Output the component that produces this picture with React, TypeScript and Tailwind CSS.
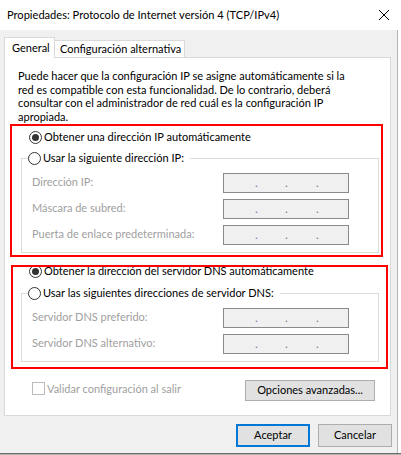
import React from "react";

function Radio({ checked }: { checked?: boolean }) {
  return (
    <span className="w-[13px] h-[13px] rounded-full border border-[#333333] bg-white flex items-center justify-center shrink-0">
      {checked && <span className="w-[7px] h-[7px] rounded-full bg-[#333333]" />}
    </span>
  );
}

function IpField() {
  return (
    <div className="w-[126px] h-[20px] border border-[#8a8a8a] bg-[#f0f0f0] flex items-end pl-[31px] pb-[3px] text-[#7a7a8a] leading-none text-[12px]">
      <span className="w-[30px]">.</span>
      <span className="w-[31px]">.</span>
      <span className="w-[30px]">.</span>
    </div>
  );
}

function Row({ label }: { label: string }) {
  return (
    <>
      <span className="text-[#a0a0a0] whitespace-nowrap">{label}</span>
      <IpField />
    </>
  );
}

function Group({ legend, rows }: { legend: string; rows: string[] }) {
  return (
    <fieldset className="ml-[16px] w-[358px] border border-[#dcdcdc] pl-[6px] pb-[7px]">
      <legend className="pr-[6px]">
        <span className="flex items-center h-[16px] gap-[2px] whitespace-nowrap">
          <Radio />
          <span>{legend}</span>
        </span>
      </legend>
      <div className="grid grid-cols-[191px_126px] gap-y-[6px] items-center pt-[6px] pl-[4px]">
        {rows.map((r) => (
          <Row key={r} label={r} />
        ))}
      </div>
    </fieldset>
  );
}

export default function App() {
  return (
    <div className="w-[401px] h-[455px] bg-white flex flex-col relative overflow-hidden font-['Lato','Liberation_Sans',Arial,sans-serif] text-[11px] text-black">
      {/* title bar */}
      <div className="h-[30px] shrink-0 flex items-center pl-[7px] bg-white">
        <span className="whitespace-nowrap text-[11.1px]">Propiedades: Protocolo de Internet versión 4 (TCP/IPv4)</span>
        <svg className="ml-auto mr-[12px]" width="10" height="10" viewBox="0 0 10 10">
          <path d="M0 0 L10 10 M10 0 L0 10" stroke="#000" strokeWidth="1" />
        </svg>
      </div>

      <div className="flex-1 flex min-h-0">
        <div className="w-[398px] bg-[#f0f0f0] border-r border-[#b4b4b4] flex flex-col">
          {/* tabs */}
          <div className="mt-[7px] h-[20px] flex items-start pl-[4px]">
            <div className="relative z-10 h-[21px] w-[51px] border border-b-0 border-[#d9d9d9] bg-white flex items-center pl-[7px]">
              General
            </div>
            <div className="mt-[3px] h-[17px] w-[130px] border-t border-r border-[#d9d9d9] bg-white flex items-center pl-[5px] whitespace-nowrap">
              Configuración alternativa
            </div>
          </div>

          {/* panel */}
          <div className="ml-[4px] w-[387px] h-[359px] border border-[#d9d9d9] bg-white flex flex-col">
            <p className="pt-[11px] pl-[13px] leading-[13.67px] whitespace-nowrap">
              Puede hacer que la configuración IP se asigne automáticamente si la
              <br />
              red es compatible con esta funcionalidad. De lo contrario, deberá
              <br />
              consultar con el administrador de red cuál es la configuración IP
              <br />
              apropiada.
            </p>

            <div className="mt-[6px] pl-[24px] h-[16px] flex items-center gap-[2px]">
              <Radio checked />
              <span>Obtener una dirección IP automáticamente</span>
            </div>
            <div className="mt-[5px]">
              <Group
                legend="Usar la siguiente dirección IP:"
                rows={["Dirección IP:", "Máscara de subred:", "Puerta de enlace predeterminada:"]}
              />
            </div>

            <div className="mt-[11px] pl-[24px] h-[16px] flex items-center gap-[2px]">
              <Radio checked />
              <span>Obtener la dirección del servidor DNS automáticamente</span>
            </div>
            <div className="mt-[6px]">
              <Group
                legend="Usar las siguientes direcciones de servidor DNS:"
                rows={["Servidor DNS preferido:", "Servidor DNS alternativo:"]}
              />
            </div>

            <div className="mt-[18px] flex items-start justify-between pl-[27px] pr-[15px]">
              <div className="mt-[1px] flex items-center gap-[2px] text-[#a0a0a0]">
                <span className="w-[13px] h-[13px] border border-[#bcbcbc] bg-white shrink-0" />
                <span>Validar configuración al salir</span>
              </div>
              <button className="w-[130px] h-[21px] border border-[#adadad] bg-[#e1e1e1] flex items-center justify-center">
                Opciones avanzadas...
              </button>
            </div>
          </div>

          {/* buttons */}
          <div className="mt-[8px] flex justify-end gap-[8px] pr-[5px]">
            <button className="w-[74px] h-[23px] border-2 border-[#0078d7] bg-[#e1e1e1] flex items-center justify-center">
              Aceptar
            </button>
            <button className="w-[74px] h-[23px] border border-[#adadad] bg-[#e1e1e1] flex items-center justify-center">
              Cancelar
            </button>
          </div>
        </div>
        <div className="flex-1 bg-white" />
      </div>
      <div className="h-[1px] shrink-0 bg-[#6d6d6d]" />
      <div className="h-[1px] shrink-0 bg-[#b0b0b0]" />

      {/* red annotation boxes */}
      <div className="absolute left-[10px] top-[124px] w-[373px] h-[133px] border-2 border-[#ff0000] pointer-events-none" />
      <div className="absolute left-[11px] top-[265px] w-[377px] h-[104px] border-2 border-[#ff0000] pointer-events-none" />
    </div>
  );
}
